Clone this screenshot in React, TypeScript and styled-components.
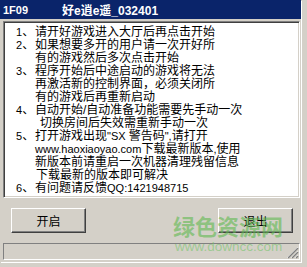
import React from 'react';
import styled, { createGlobalStyle } from 'styled-components';

const Global = createGlobalStyle`
  html, body { margin: 0; padding: 0; background: #d4d0c8; }
  body { font-family: "Liberation Sans", "Noto Sans CJK SC", sans-serif; }
`;

const Window = styled.div`
  position: relative;
  width: 307px;
  height: 267px;
  background: #d4d0c8;
  overflow: hidden;
`;

const Main = styled.div`
  width: 301px;
  height: 262px;
  display: flex;
  flex-direction: column;
  box-shadow: 1px 1px 0 #ffffff;
`;

const TitleBar = styled.div`
  height: 19px;
  flex: none;
  background: #0a246a;
  color: #ffffff;
  display: flex;
  align-items: center;
  padding-left: 3px;
  font-weight: bold;
  font-size: 11px;
`;

const AppCode = styled.span`
  width: 59px;
`;

const Caption = styled.span`
  font-size: 12px;
  font-family: "Liberation Sans", "Noto Sans CJK SC", sans-serif;
`;

const Notes = styled.div`
  flex: none;
  margin: 2px 0 0 3px;
  width: 297px;
  height: 177px;
  box-sizing: border-box;
  background: #ffffff;
  border: 1px solid;
  border-color: #808080 #ffffff #ffffff #808080;
  box-shadow: inset 1px 1px 0 #404040, inset -1px -1px 0 #d4d0c8;
  padding: 4px 0 0 12px;
  font-size: 12px;
  line-height: 13px;
  color: #000;
`;

const Item = styled.div`
  display: grid;
  grid-template-columns: 19px 1fr;
`;

const Num = styled.span`
  white-space: nowrap;
`;

const Line = styled.div<{ $indent?: number }>`
  white-space: nowrap;
  padding-left: ${(p) => p.$indent ?? 0}px;
`;

const Latin = styled.span`
  font-size: 11px;
  font-family: "Liberation Sans", sans-serif;
`;

const ButtonRow = styled.div`
  flex: none;
  display: flex;
  justify-content: space-between;
  padding: 0 8px 0 11px;
  margin-top: 10px;
`;

const Btn = styled.button`
  width: 75px;
  height: 25px;
  padding: 0;
  background: #d4d0c8;
  color: #000;
  font-size: 12px;
  font-family: "Noto Sans CJK SC", sans-serif;
  border: 1px solid;
  border-color: #ffffff #404040 #404040 #ffffff;
  box-shadow: inset -1px -1px 0 #808080, inset 1px 1px 0 #d4d0c8;
`;

const StatusBar = styled.div`
  position: relative;
  flex: none;
  margin: 10px 0 0 3px;
  width: 297px;
  height: 17px;
  box-sizing: border-box;
  border: 1px solid;
  border-color: #808080 #ffffff #ffffff #808080;
`;

const Grip = styled.svg`
  position: absolute;
  right: 0;
  bottom: 0;
`;

const Watermark = styled.div`
  position: absolute;
  left: 173px;
  top: 212px;
  display: flex;
  flex-direction: column;
  align-items: flex-start;
  pointer-events: none;
`;

const MarkTitle = styled.span`
  font-family: "Noto Sans CJK SC", sans-serif;
  font-weight: bold;
  font-size: 22px;
  line-height: 27px;
  color: rgba(95, 185, 80, 0.6);
`;

const MarkUrl = styled.span`
  font-family: "Liberation Sans", sans-serif;
  font-size: 13.5px;
  line-height: 16px;
  margin-left: 2px;
  color: rgba(110, 195, 100, 0.55);
`;

const items: { n: number; lines: { text: React.ReactNode; indent?: number }[] }[] = [
  { n: 1, lines: [{ text: '请开好游戏进入大厅后再点击开始' }] },
  {
    n: 2,
    lines: [{ text: '如果想要多开的用户请一次开好所' }, { text: '有的游戏然后多次点击开始' }],
  },
  {
    n: 3,
    lines: [
      { text: '程序开始后中途启动的游戏将无法' },
      { text: '再激活新的控制界面，必须关闭所' },
      { text: '有的游戏后再重新启动' },
    ],
  },
  {
    n: 4,
    lines: [
      { text: '自动开始/自动准备功能需要先手动一次' },
      { text: '切换房间后失效需重新手动一次', indent: 5 },
    ],
  },
  {
    n: 5,
    lines: [
      {
        text: (
          <>
            打开游戏出现<Latin>"SX </Latin>警告码<Latin>",</Latin>请打开
          </>
        ),
      },
      {
        text: (
          <>
            <Latin>www.haoxiaoyao.com</Latin>下载最新版本<Latin>,</Latin>使用
          </>
        ),
        indent: -2,
      },
      { text: '新版本前请重启一次机器清理残留信息', indent: -2 },
      { text: '下载最新的版本即可解决', indent: 1 },
    ],
  },
  {
    n: 6,
    lines: [
      {
        text: (
          <>
            有问题请反馈<Latin>QQ:1421948715</Latin>
          </>
        ),
      },
    ],
  },
];

export default function App() {
  return (
    <>
      <Global />
      <Window>
        <Main>
          <TitleBar>
            <AppCode>1F09</AppCode>
            <Caption>好e逍e遥_032401</Caption>
          </TitleBar>
          <Notes>
            {items.map((it) => (
              <Item key={it.n}>
                <Num>
                  <Latin>{it.n}</Latin>、
                </Num>
                <div>
                  {it.lines.map((l, i) => (
                    <Line key={i} $indent={l.indent}>
                      {l.text}
                    </Line>
                  ))}
                </div>
              </Item>
            ))}
          </Notes>
          <ButtonRow>
            <Btn>开启</Btn>
            <Btn>退出</Btn>
          </ButtonRow>
          <StatusBar>
            <Grip width="13" height="13" viewBox="0 0 13 13">
              {[0, 4, 8].map((o) => (
                <g key={o}>
                  <line x1={12} y1={1 + o} x2={1 + o} y2={12} stroke="#ffffff" strokeWidth="1" />
                  <line x1={12} y1={2 + o} x2={2 + o} y2={12} stroke="#808080" strokeWidth="1.4" />
                </g>
              ))}
            </Grip>
          </StatusBar>
        </Main>
        <Watermark>
          <MarkTitle>绿色资源网</MarkTitle>
          <MarkUrl>www.downcc.com</MarkUrl>
        </Watermark>
      </Window>
    </>
  );
}
